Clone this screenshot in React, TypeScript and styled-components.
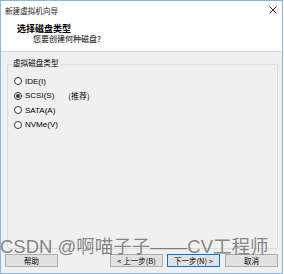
import styled, { createGlobalStyle } from "styled-components";

const GlobalStyle = createGlobalStyle`
  html, body {
    margin: 0;
    padding: 0;
    background: #ffffff;
  }
  body {
    font-family: "Noto Sans CJK SC", "Liberation Sans", sans-serif;
    color: #000000;
  }
`;

const Window = styled.div`
  position: relative;
  width: 283px;
  height: 274px;
  box-sizing: border-box;
  border: 1px solid #8ab6e2;
  display: flex;
  flex-direction: column;
  background: #ffffff;
  overflow: hidden;
`;

const TitleBar = styled.div`
  height: 18px;
  display: flex;
  align-items: center;
  justify-content: space-between;
  padding: 0 5px 0 4px;
  font-size: 7.6px;
  color: #1a1a1a;
`;

const Header = styled.div`
  height: 33px;
  box-sizing: border-box;
  padding: 4px 0 0 16px;
  border-bottom: 1px solid #dcdcdc;
`;

const Heading = styled.div`
  font-size: 9px;
  font-weight: bold;
  line-height: 11px;
`;

const SubHeading = styled.div`
  font-size: 8px;
  line-height: 10px;
  padding-left: 16px;
`;

const Body = styled.div`
  flex: 1;
  background: #f0f0f0;
  display: flex;
  flex-direction: column;
  padding: 6px 4px 4px 6px;
`;

const Group = styled.fieldset`
  margin: 0;
  height: 191px;
  box-sizing: border-box;
  border: 1px solid #dcdcdc;
  border-radius: 2px;
  padding: 5px 6px 0 6px;
  display: flex;
  flex-direction: column;
  gap: 4.5px;
`;

const Legend = styled.legend`
  font-size: 7.6px;
  line-height: 9px;
  padding: 0 1px 4px 1px;
  margin-left: -2px;
`;

const Option = styled.label`
  display: flex;
  align-items: center;
  height: 10px;
  font-size: 8px;
  font-family: "Liberation Sans", "Noto Sans CJK SC", sans-serif;
`;

const Radio = styled.span<{ $checked?: boolean }>`
  width: 8px;
  height: 8px;
  box-sizing: border-box;
  border-radius: 50%;
  border: 1px solid #333333;
  background: #ffffff;
  margin-right: 3px;
  display: flex;
  align-items: center;
  justify-content: center;

  &::after {
    content: "";
    width: 4px;
    height: 4px;
    border-radius: 50%;
    background: ${(p) => (p.$checked ? "#333333" : "transparent")};
  }
`;

const Hint = styled.span`
  margin-left: 14px;
  font-family: "Noto Sans CJK SC", sans-serif;
`;

const Footer = styled.div`
  display: flex;
  align-items: center;
  gap: 4px;
  margin-top: 5px;
  margin-left: -2px;
`;

const Spacer = styled.div`
  flex: 1;
`;

const Button = styled.button<{ $primary?: boolean; $gap?: number }>`
  width: 53px;
  height: 13px;
  box-sizing: border-box;
  padding: 0;
  margin-left: ${(p) => p.$gap ?? 0}px;
  background: #e1e1e1;
  border: 1px solid ${(p) => (p.$primary ? "#0078d7" : "#adadad")};
  font-family: "Noto Sans CJK SC", sans-serif;
  font-size: 7.5px;
  line-height: 11px;
  color: #000000;
`;

const Watermark = styled.div`
  position: absolute;
  left: -1px;
  top: 235px;
  font-size: 18.5px;
  line-height: 22px;
  white-space: nowrap;
  color: rgba(70, 70, 70, 0.65);
  font-family: "Liberation Sans", "Noto Sans CJK SC", sans-serif;
  pointer-events: none;
`;

const CloseIcon = () => (
  <svg width="8" height="8" viewBox="0 0 8 8">
    <path d="M0.5 0.5 L7.5 7.5 M7.5 0.5 L0.5 7.5" stroke="#333" strokeWidth="1" />
  </svg>
);

const options = [
  { label: "IDE(I)", checked: false },
  { label: "SCSI(S)", checked: true, hint: "(推荐)" },
  { label: "SATA(A)", checked: false },
  { label: "NVMe(V)", checked: false },
];

export default function App() {
  return (
    <>
      <GlobalStyle />
      <Window>
        <TitleBar>
          <span>新建虚拟机向导</span>
          <CloseIcon />
        </TitleBar>
        <Header>
          <Heading>选择磁盘类型</Heading>
          <SubHeading>您要创建何种磁盘?</SubHeading>
        </Header>
        <Body>
          <Group>
            <Legend>虚拟磁盘类型</Legend>
            {options.map((o) => (
              <Option key={o.label}>
                <Radio $checked={o.checked} />
                {o.label}
                {o.hint && <Hint>{o.hint}</Hint>}
              </Option>
            ))}
          </Group>
          <Footer>
            <Button>帮助</Button>
            <Spacer />
            <Button>&lt; 上一步(B)</Button>
            <Button $primary>下一步(N) &gt;</Button>
            <Button $gap={1}>取消</Button>
          </Footer>
        </Body>
        <Watermark>CSDN @啊喵子子——CV工程师</Watermark>
      </Window>
    </>
  );
}
